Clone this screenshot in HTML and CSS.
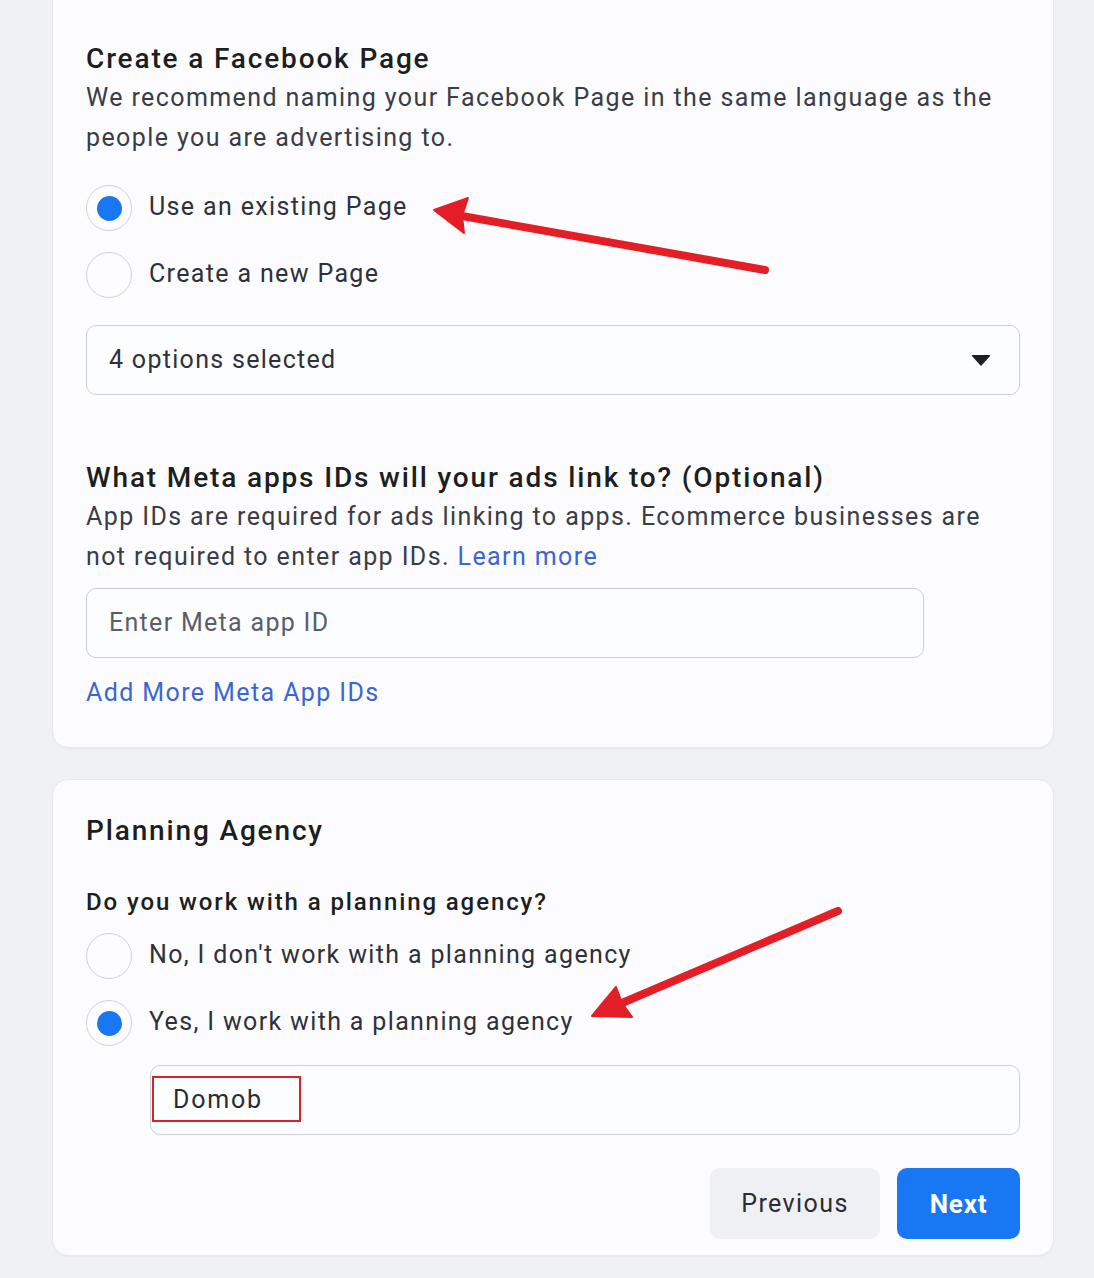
FILE: index.html
```html
<!DOCTYPE html>
<html lang="en">
<head>
<meta charset="utf-8">
<title>Create a Facebook Page</title>
<link rel="stylesheet" href="styles.css">
</head>
<body>
<div class="page">
  <section class="card card-top">
    <h2 class="title">Create a Facebook Page</h2>
    <p class="desc">We recommend naming your Facebook Page in the same language as the people you are advertising to.</p>
    <div class="radios radios-page">
      <label class="radio-row"><span class="radio checked"></span><span class="radio-label">Use an existing Page</span></label>
      <label class="radio-row"><span class="radio"></span><span class="radio-label">Create a new Page</span></label>
    </div>
    <div class="select">
      <span class="select-text">4 options selected</span>
      <span class="caret"></span>
    </div>
    <h2 class="title title-apps">What Meta apps IDs will your ads link to? (Optional)</h2>
    <p class="desc">App IDs are required for ads linking to apps. Ecommerce businesses are not required to enter app IDs. <a class="link" href="#">Learn more</a></p>
    <div class="input input-app"><span class="placeholder">Enter Meta app ID</span></div>
    <a class="link add-more" href="#">Add More Meta App IDs</a>
  </section>

  <section class="card card-bottom">
    <h2 class="title">Planning Agency</h2>
    <p class="question">Do you work with a planning agency?</p>
    <div class="radios radios-agency">
      <label class="radio-row"><span class="radio"></span><span class="radio-label">No, I don't work with a planning agency</span></label>
      <label class="radio-row"><span class="radio checked"></span><span class="radio-label">Yes, I work with a planning agency</span></label>
    </div>
    <div class="input input-agency"><span class="agency-value">Domob</span></div>
    <div class="actions">
      <button class="btn btn-prev">Previous</button>
      <button class="btn btn-next">Next</button>
    </div>
  </section>

  <svg class="annotations" width="1094" height="1278" viewBox="0 0 1094 1278" aria-hidden="true">
    <g fill="#e41e26" stroke="#e41e26" stroke-linecap="round" stroke-linejoin="round">
      <line x1="765" y1="270" x2="462" y2="216" stroke-width="8"/>
      <polygon points="434,210 468,198 462,216 464,233" stroke-width="2"/>
      <line x1="838" y1="911" x2="622" y2="1003" stroke-width="8"/>
      <polygon points="592,1016 616,987 622,1003 632,1017" stroke-width="2"/>
    </g>
  </svg>
</div>
</body>
</html>
```

FILE: styles.css
```css
* { box-sizing: border-box; }

html, body {
  margin: 0;
  padding: 0;
  background: #f0f1f4;
}

body {
  font-family: Roboto, "Liberation Sans", Arial, sans-serif;
  color: #1c1e21;
}

.page {
  position: relative;
  width: 1094px;
  height: 1278px;
  padding: 0 40px 0 52px;
  display: flex;
  flex-direction: column;
  gap: 31px;
  overflow: hidden;
}

.card {
  width: 1002px;
  background: #fcfcfe;
  border: 1px solid #e6e8ec;
  border-radius: 16px;
  box-shadow: 0 1px 2px rgba(0, 0, 0, 0.04);
  padding: 0 33px;
  display: flex;
  flex-direction: column;
  align-items: flex-start;
}

.card-top {
  margin-top: -16px;
  padding-top: 55px;
  padding-bottom: 34px;
  height: 764px;
}

.card-bottom {
  padding-top: 32px;
  height: 477px;
}

.title {
  margin: 0;
  font-size: 28px;
  line-height: 38px;
  font-weight: 500;
  color: #1c1e21;
  letter-spacing: 1.85px;
}

.title-apps {
  margin-top: 64px;
}

.desc {
  margin: 0;
  font-size: 25px;
  line-height: 40px;
  font-weight: 400;
  color: #3a3c46;
  letter-spacing: 1.4px;
  max-width: 935px;
}

.link {
  color: #3b66d2;
  text-decoration: none;
}

.radios {
  display: flex;
  flex-direction: column;
  gap: 21px;
}

.radios-page {
  margin-top: 27px;
}

.radios-agency {
  margin-top: 11px;
}

.radio-row {
  display: flex;
  align-items: center;
  gap: 17px;
  height: 46px;
}

.radio {
  width: 46px;
  height: 46px;
  border-radius: 50%;
  border: 1px solid #cfd2d8;
  background: #fdfdff;
  display: flex;
  align-items: center;
  justify-content: center;
  flex: none;
}

.radio.checked::after {
  content: "";
  width: 25px;
  height: 25px;
  border-radius: 50%;
  background: #1877f2;
}

.radio-label {
  font-size: 25px;
  line-height: 40px;
  color: #2f3139;
  letter-spacing: 1.35px;
  position: relative;
  top: -1px;
}

.select {
  margin-top: 27px;
  width: 934px;
  height: 70px;
  border: 1px solid #ccd0d6;
  border-radius: 10px;
  background: #fcfdff;
  display: flex;
  align-items: center;
  justify-content: space-between;
  padding: 0 28px 0 22px;
}

.select-text {
  font-size: 25px;
  color: #2f3139;
  letter-spacing: 1.3px;
  position: relative;
  top: -1px;
}

.caret {
  width: 0;
  height: 0;
  border-left: 10px solid transparent;
  border-right: 10px solid transparent;
  border-top: 11px solid #1c1e21;
  border-radius: 2px;
}

.input {
  height: 70px;
  border: 1px solid #ccd0d6;
  border-radius: 10px;
  background: #fcfdff;
  display: flex;
  align-items: center;
}

.input-app {
  margin-top: 11px;
  width: 838px;
  padding-left: 22px;
}

.placeholder {
  font-size: 25px;
  color: #5a5d67;
  letter-spacing: 1.3px;
  position: relative;
  top: -1px;
}

.add-more {
  margin-top: 15px;
  font-size: 25px;
  line-height: 40px;
  letter-spacing: 1.4px;
}

.question {
  margin: 32px 0 0;
  font-size: 24px;
  line-height: 40px;
  font-weight: 500;
  color: #1c1e21;
  letter-spacing: 1.9px;
}

.input-agency {
  margin-top: 19px;
  margin-left: 64px;
  width: 870px;
  align-items: flex-start;
  padding: 10px 0 0 1px;
}

.agency-value {
  width: 149px;
  height: 46px;
  border: 2px solid #d7222c;
  display: flex;
  align-items: center;
  padding-left: 19px;
  font-size: 25px;
  color: #2a2c34;
  letter-spacing: 1.8px;
}

.actions {
  margin-top: 33px;
  align-self: stretch;
  display: flex;
  justify-content: flex-end;
  gap: 17px;
}

.btn {
  height: 71px;
  border: none;
  border-radius: 10px;
  font-family: Roboto, "Liberation Sans", Arial, sans-serif;
  font-size: 25px;
  cursor: pointer;
}

.btn-prev {
  width: 170px;
  background: #eef0f3;
  color: #2a2c34;
  letter-spacing: 1.4px;
}

.btn-next {
  width: 123px;
  background: #1877f2;
  color: #ffffff;
  font-weight: 700;
  font-size: 26px;
  letter-spacing: 0.8px;
}

.annotations {
  position: absolute;
  left: 0;
  top: 0;
  pointer-events: none;
}
```
